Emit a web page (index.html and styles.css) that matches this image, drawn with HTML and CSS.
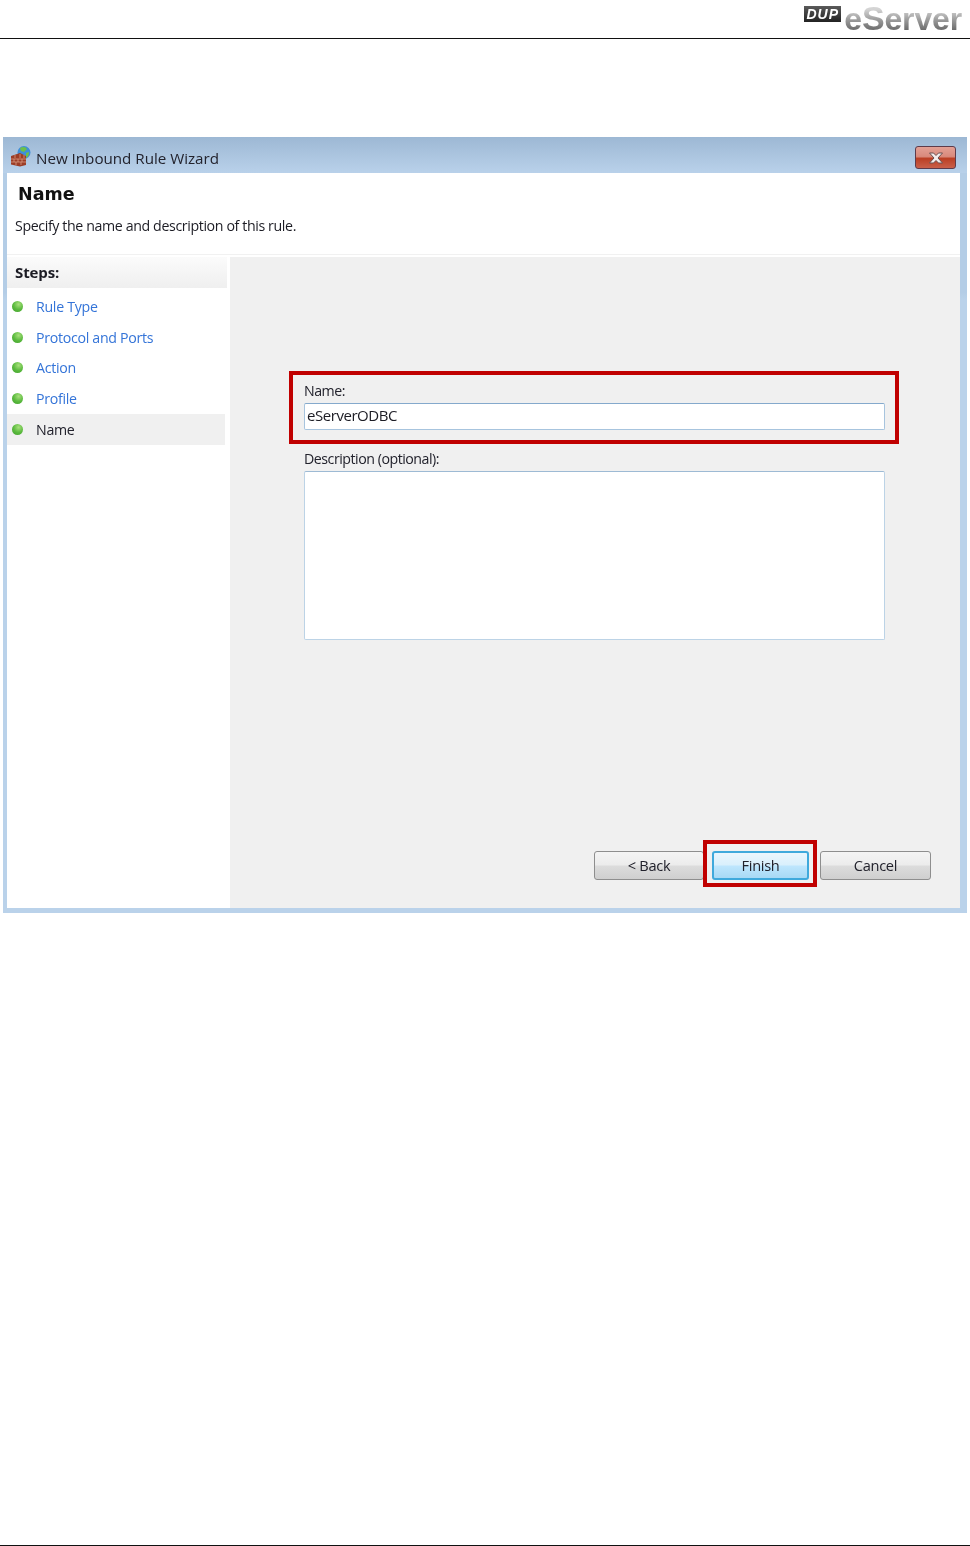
FILE: index.html
```html
<!DOCTYPE html>
<html lang="en">
<head>
<meta charset="utf-8">
<title>New Inbound Rule Wizard</title>
<link rel="stylesheet" href="styles.css">
</head>
<body>
<div class="page">
  <header class="page-header">
    <div class="logo">
      <span class="logo-badge"><span class="logo-badge-text">DUP</span></span>
      <span class="logo-text">e<span class="logo-big">S</span>erver</span>
    </div>
  </header>
  <main class="page-main">
    <section class="window">
      <div class="titlebar">
        <svg class="app-icon" width="22" height="22" viewBox="0 0 22 22">
          <circle cx="14" cy="7.500" r="6.500" fill="#3f8fd8"/>
          <path d="M10 3c3-2 6-1 7 1l-3 3-3-1z" fill="#6cc04a"/>
          <path d="M16 8l3-1c0 3-1 5-3 6z" fill="#6cc04a"/>
          <path d="M1 11l9-3 6 3v9l-6 1.500-9-2z" fill="#9c3d26"/>
          <path d="M1 14h15M1 17h15M5 10v3M10 9v4M14 10v3M4 14v3M8 14v3M12 14v3M6 17v3M11 17v3" stroke="#d99a80" stroke-width=".8" fill="none"/>
        </svg>
        <span class="title-text">New Inbound Rule Wizard</span>
        <span class="close-btn">
          <svg width="16" height="12" viewBox="0 0 16 12"><path d="M1.500 1h4l2.500 2.500L10.500 1h4l-4.500 5 4.500 5h-4L8 8.500 5.500 11h-4L6 6z" fill="#f3eeee" stroke="#6b5050" stroke-width="1"/></svg>
        </span>
      </div>
      <div class="client">
        <div class="intro">
          <h1 class="intro-title">Name</h1>
          <p class="intro-text">Specify the name and description of this rule.</p>
        </div>
        <div class="panels">
          <aside class="steps">
            <div class="steps-head">Steps:</div>
            <ul class="steps-list">
              <li class="step"><span class="dot"></span><span class="step-link">Rule Type</span></li>
              <li class="step"><span class="dot"></span><span class="step-link">Protocol and Ports</span></li>
              <li class="step"><span class="dot"></span><span class="step-link">Action</span></li>
              <li class="step"><span class="dot"></span><span class="step-link">Profile</span></li>
              <li class="step step-current"><span class="dot"></span><span>Name</span></li>
            </ul>
          </aside>
          <div class="content">
            <div class="highlight-field">
              <div class="field-label">Name:</div>
              <div class="text-input">eServerODBC</div>
            </div>
            <div class="desc-field">
              <div class="field-label">Description (optional):</div>
              <div class="text-area"></div>
            </div>
            <div class="buttons">
              <button class="btn btn-back">&lt; Back</button>
              <span class="finish-wrap">
                <button class="btn btn-finish">Finish</button>
                <span class="finish-mark"></span>
              </span>
              <button class="btn btn-cancel">Cancel</button>
            </div>
          </div>
        </div>
      </div>
    </section>
  </main>
  <footer class="page-footer"></footer>
</div>
</body>
</html>
```
FILE: styles.css
```css
* { box-sizing: border-box; }
html, body { margin: 0; padding: 0; background: #fff; }
body { font-family: "Open Sans", "Noto Sans", "Liberation Sans", sans-serif; color: #1c1c24; }
.page { width: 970px; height: 1546px; display: flex; flex-direction: column; overflow: hidden; }

.page-header { height: 39px; border-bottom: 1px solid #111; display: flex; justify-content: flex-end; }
.logo { display: flex; align-items: flex-start; padding: 0 8px 0 0; filter: blur(.4px); }
.logo-badge { width: 37px; height: 16px; margin-top: 6px; background: linear-gradient(#5a5a5a, #222); display: flex; align-items: center; justify-content: center; }
.logo-badge-text { font: italic bold 14px/16px "Liberation Sans", sans-serif; color: #fff; letter-spacing: 1px; }
.logo-text { margin-left: 3px; font: bold 32px/36px "Liberation Sans", sans-serif; letter-spacing: -.15px; background: linear-gradient(#d4d4d4 25%, #999 55%, #666 85%); -webkit-background-clip: text; background-clip: text; color: transparent; }
.logo-big { font-size: 34px; }

.page-main { flex: 1; padding: 98px 3px 0; }
.window { width: 964px; height: 776px; display: flex; flex-direction: column; background: linear-gradient(#b4cde6 0, #b4cde6 20%, #bad2ea 21%, #bad2ea 100%); padding: 0 7px 5px 4px; border-radius: 2px 2px 0 0; filter: blur(.35px); }
.titlebar { height: 36px; margin: 0 -7px 0 -4px; padding: 0 11px 0 7px; display: flex; align-items: center; background: linear-gradient(#9db8d4, #b9d1ea); }
.app-icon { flex: none; margin-top: 2px; }
.title-text { margin-left: 4px; font-size: 15.2px; letter-spacing: -.02px; color: #23232d; flex: 1; padding-top: 5px; }
.close-btn { width: 41px; height: 23px; margin-top: 5px; border: 1px solid #5e3b4a; border-radius: 3px; background: linear-gradient(#e3a095 0, #d98a7c 45%, #bb3f24 55%, #c9604a 100%); display: flex; align-items: center; justify-content: center; }

.client { flex: 1; display: flex; flex-direction: column; background: #fff; min-height: 0; min-width: 0; }
.intro { height: 82px; padding: 8px 0 0 8px; border-bottom: 1px solid #f1f1f1; }
.intro-title { margin: 0 0 0 3px; font: bold 17.500px/26px "DejaVu Sans", sans-serif; color: #111; }
.intro-text { margin: 9px 0 0; font-size: 14.2px; line-height: 20px; letter-spacing: -.38px; }
.panels { flex: 1; display: flex; padding-top: 2px; min-width: 0; }
.steps { width: 220px; flex: none; margin-right: 3px; }
.steps-head { height: 31px; padding: 4px 0 0 8px; font-size: 15px; font-weight: 700; line-height: 23px; letter-spacing: -.1px; background: linear-gradient(#fbfbfb, #efefef); }
.steps-list { list-style: none; margin: 3px 0 0; padding: 0; }
.step { height: 30.75px; display: flex; align-items: center; padding-left: 5px; font-size: 14.2px; letter-spacing: -.3px; color: #3474d8; margin-right: 2px; }
.step-current { background: #f0f0f0; color: #22222c; }
.dot { width: 11px; height: 11px; margin-right: 13px; border-radius: 50%; background: radial-gradient(circle at 60% 30%, #a8e07c 0, #5cbb3f 50%, #3f9f2c 100%); }

.content { flex: 1; min-width: 0; background: #f0f0f0; padding: 114px 0 0 59px; display: flex; flex-direction: column; }
.highlight-field { width: 610px; height: 73px; border: 4px solid #c00000; padding: 6px 10px 0 11px; }
.field-label { font-size: 14.2px; line-height: 20px; letter-spacing: -.48px; color: #22222c; }
.text-input { width: 581px; height: 27px; margin-top: 2px; padding-left: 2px; background: #fff; border: 1px solid #a7c4de; border-top-color: #84a9cc; border-radius: 2px; font-size: 15px; line-height: 23px; letter-spacing: -.45px; }
.desc-field { margin: 5px 0 0 15px; }
.text-area { width: 581px; height: 169px; margin-top: 2px; background: #fff; border: 1px solid #bcd3e6; border-top-color: #9dbad4; border-radius: 2px; }
.buttons { margin: 211px 0 0 305px; display: flex; align-items: flex-start; width: 337px; }
.btn { font: 14.6px/27px "Open Sans", "Noto Sans", sans-serif; letter-spacing: -.3px; height: 29px; padding: 0; color: #22222c; border: 1px solid #8e8e8e; border-radius: 3px; background: linear-gradient(#f4f4f4 0, #ececec 48%, #dcdcdc 52%, #cfcfcf 100%); }
.btn-back { width: 110px; }
.finish-wrap { position: relative; margin: 0 11px 0 8px; display: block; height: 29px; }
.btn-finish { display: block; width: 97px; line-height: 25px; border: 2px solid #3fa9dc; background: linear-gradient(#eaf6fd 0, #d9f0fc 48%, #bee6fd 52%, #a7d9f5 100%); }
.finish-mark { position: absolute; left: -9px; top: -11px; width: 114px; height: 47px; border: 4px solid #c00000; }
.btn-cancel { width: 111px; }

.page-footer { height: 1px; border-top: 1px solid #111; }
```
